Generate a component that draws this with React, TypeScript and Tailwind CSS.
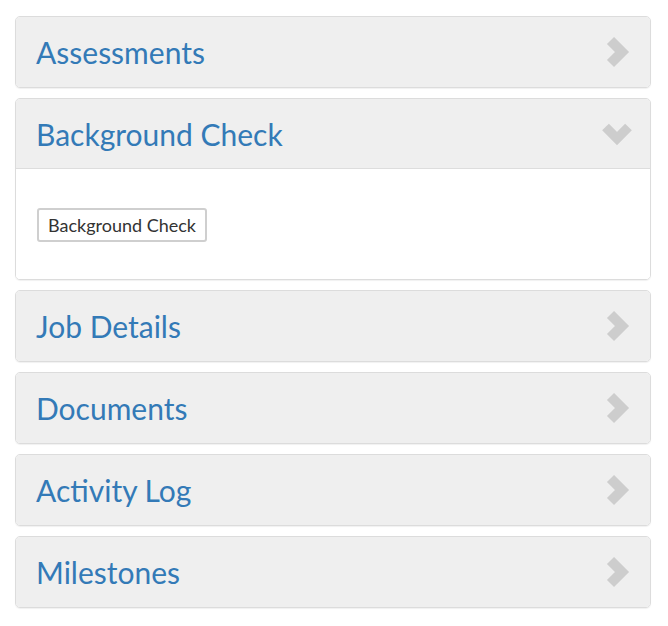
import React from "react";

const ChevronRight = () => (
  <svg width="25" height="32" viewBox="0 0 25 32">
    <polyline points="5.5,4.5 17,16 5.5,27.5" fill="none" stroke="#cdcdcd" strokeWidth="10" strokeLinecap="butt" strokeLinejoin="miter" />
  </svg>
);

const ChevronDown = () => (
  <svg width="34" height="26" viewBox="0 0 34 26">
    <polyline points="5.5,6 17,17.5 28.5,6" fill="none" stroke="#cdcdcd" strokeWidth="9.5" strokeLinecap="butt" strokeLinejoin="miter" />
  </svg>
);

const Header = ({ title, open }: { title: string; open?: boolean }) => (
  <div className={`flex h-[70px] items-center justify-between bg-[#efefef] pl-[20px] ${open ? "border-b border-[#dddddd]" : ""}`}>
    <span className="text-[30px] leading-none text-[#337ab7]" style={{ fontFamily: "Lato, 'Open Sans', sans-serif" }}>
      {title}
    </span>
    <div className="mr-[16px] flex w-[34px] items-center justify-center">
      {open ? <ChevronDown /> : <ChevronRight />}
    </div>
  </div>
);

export default function App() {
  const closed = ["Job Details", "Documents", "Activity Log", "Milestones"];
  return (
    <div className="min-h-[626px] bg-white pl-[15px] pr-[17px] pt-[16px]" style={{ fontFamily: "Lato, sans-serif" }}>
      <div className="flex flex-col gap-[10px]">
        <div className="overflow-hidden rounded-[5px] border border-[#dcdcdc] shadow-[0_1px_1px_rgba(0,0,0,0.06)]">
          <Header title="Assessments" />
        </div>
        <div className="overflow-hidden rounded-[5px] border border-[#dcdcdc] shadow-[0_1px_1px_rgba(0,0,0,0.06)]">
          <Header title="Background Check" open />
          <div className="h-[110px] bg-white pl-[21px] pt-[39px]">
            <button className="h-[34px] rounded-[3px] border-2 border-[#cfcfcf] bg-white px-[9px] text-[18px] text-[#333333]" style={{ fontFamily: "Lato, sans-serif" }}>
              Background Check
            </button>
          </div>
        </div>
        {closed.map((t) => (
          <div key={t} className="overflow-hidden rounded-[5px] border border-[#dcdcdc] shadow-[0_1px_1px_rgba(0,0,0,0.06)]">
            <Header title={t} />
          </div>
        ))}
      </div>
    </div>
  );
}
